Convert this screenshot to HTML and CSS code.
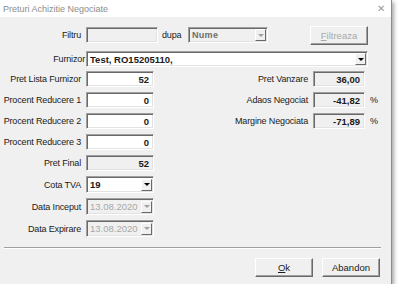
FILE: index.html
```html
<!DOCTYPE html>
<html>
    <link rel="stylesheet" href="styles.css">
    <head>
        <meta charset="utf-8">
        <title>Preturi Achizitie Negociate</title>
    </head>
    <body>
        <div class="window">
            <div class="titlebar">
                <span class="title">Preturi Achizitie Negociate</span>
                <span class="close">&#x2715;</span>
            </div>
            <div class="content">
                <div class="filter-row">
                    <label class="lbl">Filtru</label>
                    <div class="box disabled filter-box"></div>
                    <span class="dupa">dupa</span>
                    <div class="box disabled combo nume">
                        <span class="val grey-bold">Nume</span>
                        <span class="drop dis"><i class="arrow"></i></span>
                    </div>
                    <button class="btn btn-filter" disabled><u>F</u>iltreaza</button>
                </div>

                <div class="furnizor-row">
                    <label class="lbl lbl-furn">Furnizor</label>
                    <div class="box combo furnizor">
                        <span class="val bold">Test, RO15205110,</span>
                        <span class="drop"><i class="arrow"></i></span>
                    </div>
                </div>

                <div class="columns">
                    <div class="col-left">
                        <div class="row">
                            <label class="lbl">Pret Lista Furnizor</label>
                            <div class="box num">52</div>
                        </div>
                        <div class="row">
                            <label class="lbl">Procent Reducere 1</label>
                            <div class="box num">0</div>
                        </div>
                        <div class="row">
                            <label class="lbl">Procent Reducere 2</label>
                            <div class="box num">0</div>
                        </div>
                        <div class="row">
                            <label class="lbl">Procent Reducere 3</label>
                            <div class="box num">0</div>
                        </div>
                        <div class="row">
                            <label class="lbl">Pret Final</label>
                            <div class="box num disabled">52</div>
                        </div>
                        <div class="row row-combo">
                            <label class="lbl">Cota TVA</label>
                            <div class="box combo small">
                                <span class="val bold">19</span>
                                <span class="drop"><i class="arrow"></i></span>
                            </div>
                        </div>
                        <div class="row row-combo">
                            <label class="lbl">Data Inceput</label>
                            <div class="box combo small disabled">
                                <span class="val grey">13.08.2020</span>
                                <span class="drop dis"><i class="arrow"></i></span>
                            </div>
                        </div>
                        <div class="row row-combo">
                            <label class="lbl">Data Expirare</label>
                            <div class="box combo small disabled">
                                <span class="val grey">13.08.2020</span>
                                <span class="drop dis"><i class="arrow"></i></span>
                            </div>
                        </div>
                    </div>

                    <div class="col-right">
                        <div class="row">
                            <label class="lbl lbl-right">Pret Vanzare</label>
                            <div class="box num disabled short">36,00</div>
                        </div>
                        <div class="row">
                            <label class="lbl lbl-right">Adaos Negociat</label>
                            <div class="box num disabled short">-41,82</div>
                            <span class="pct">%</span>
                        </div>
                        <div class="row">
                            <label class="lbl lbl-right">Margine Negociata</label>
                            <div class="box num disabled short">-71,89</div>
                            <span class="pct">%</span>
                        </div>
                    </div>
                </div>

                <div class="separator"></div>

                <div class="actions">
                    <button class="btn"><u>O</u>k</button>
                    <button class="btn">Abandon</button>
                </div>
            </div>
        </div>
    </body>
</html>
```

FILE: styles.css
```css
body {
    margin: 0;
    background: #ffffff;
    font-family: 'Liberation Sans', Arial, sans-serif;
    font-size: 9px;
    letter-spacing: -0.15px;
    color: #1a1a1a;
}

.window {
    width: 391px;
    height: 284px;
    background: #f0f0f0;
    border-right: 1px solid #8a8a8a;
    box-shadow: 2px 2px 4px rgba(0, 0, 0, 0.35);
    display: flex;
    flex-direction: column;
}

.titlebar {
    height: 17px;
    background: #ffffff;
    display: flex;
    align-items: center;
    justify-content: space-between;
    padding: 0 6px 0 3px;
}

.title {
    color: #8c8c8c;
    font-size: 9px;
    letter-spacing: 0;
}

.close {
    color: #9a9a9a;
    font-size: 10px;
}

.content {
    flex: 1;
    display: flex;
    flex-direction: column;
}

.lbl {
    width: 81px;
    text-align: right;
    flex-shrink: 0;
    white-space: nowrap;
}

/* sunken field */
.box {
    box-sizing: border-box;
    height: 16px;
    background: #ffffff;
    border-top: 1px solid #a0a0a0;
    border-left: 1px solid #a0a0a0;
    border-right: 1px solid #ffffff;
    border-bottom: 1px solid #ffffff;
    box-shadow: inset 1px 1px 0 #696969, inset -1px -1px 0 #e3e3e3;
    display: flex;
    align-items: center;
}

.box.disabled {
    background: #f0f0f0;
}

.num {
    width: 68px;
    justify-content: flex-end;
    padding-right: 4px;
    font-weight: bold;
    font-size: 9.5px;
    letter-spacing: 0;
}

.num.short {
    width: 52px;
}

.filter-row {
    display: flex;
    align-items: center;
    margin-top: 8px;
    height: 20px;
}

.filter-box {
    width: 72px;
    margin-left: 5px;
}

.dupa {
    margin-left: 4px;
    width: 26px;
}

.combo {
    padding-left: 3px;
}

.combo .val {
    flex: 1;
    white-space: nowrap;
}

.nume {
    width: 80px;
}

.bold {
    font-weight: bold;
    font-size: 9.5px;
    letter-spacing: 0;
}

.grey-bold {
    font-weight: bold;
    color: #6d6d6d;
    letter-spacing: 0.3px;
}

.grey {
    color: #a8a8a8;
    font-size: 9.5px;
    letter-spacing: 0;
}

.drop {
    width: 11px;
    height: 12px;
    margin-right: 1px;
    box-sizing: border-box;
    background: #f0f0f0;
    border-top: 1px solid #ffffff;
    border-left: 1px solid #ffffff;
    border-right: 1px solid #696969;
    border-bottom: 1px solid #696969;
    display: flex;
    align-items: center;
    justify-content: center;
}

.arrow {
    width: 0;
    height: 0;
    border-left: 3px solid transparent;
    border-right: 3px solid transparent;
    border-top: 3px solid #000;
}

.drop.dis .arrow {
    border-top-color: #a0a0a0;
}

.btn {
    font-family: 'Liberation Sans', Arial, sans-serif;
    font-size: 9.5px;
    background: #f0f0f0;
    border-top: 1px solid #ffffff;
    border-left: 1px solid #ffffff;
    border-right: 1px solid #696969;
    border-bottom: 1px solid #696969;
    box-shadow: inset -1px -1px 0 #a0a0a0;
    width: 58px;
    height: 19px;
    padding: 0;
    color: #1a1a1a;
}

.btn-filter {
    margin-left: 42px;
    color: #a8a8a8;
}

.furnizor-row {
    display: flex;
    align-items: center;
    margin-top: 6px;
}

.lbl-furn {
    width: 85px;
    margin-right: 1px;
}

.furnizor {
    width: 282px;
}

.columns {
    display: flex;
    margin-top: 4px;
}

.col-left,
.col-right {
    display: flex;
    flex-direction: column;
    gap: 5px;
}

.row {
    display: flex;
    align-items: center;
    gap: 5px;
    height: 16px;
}

.row-combo {
    height: 17px;
}

.row-combo .box {
    height: 17px;
}

.small {
    width: 68px;
}

.col-right {
    margin-left: 6px;
}

.lbl-right {
    width: 148px;
}

.separator {
    margin: 10px 10px 0 4px;
    height: 0;
    border-top: 1px solid #a0a0a0;
    border-bottom: 1px solid #ffffff;
}

.actions {
    display: flex;
    justify-content: flex-end;
    gap: 9px;
    margin-top: 9px;
    padding-right: 11px;
}
```
